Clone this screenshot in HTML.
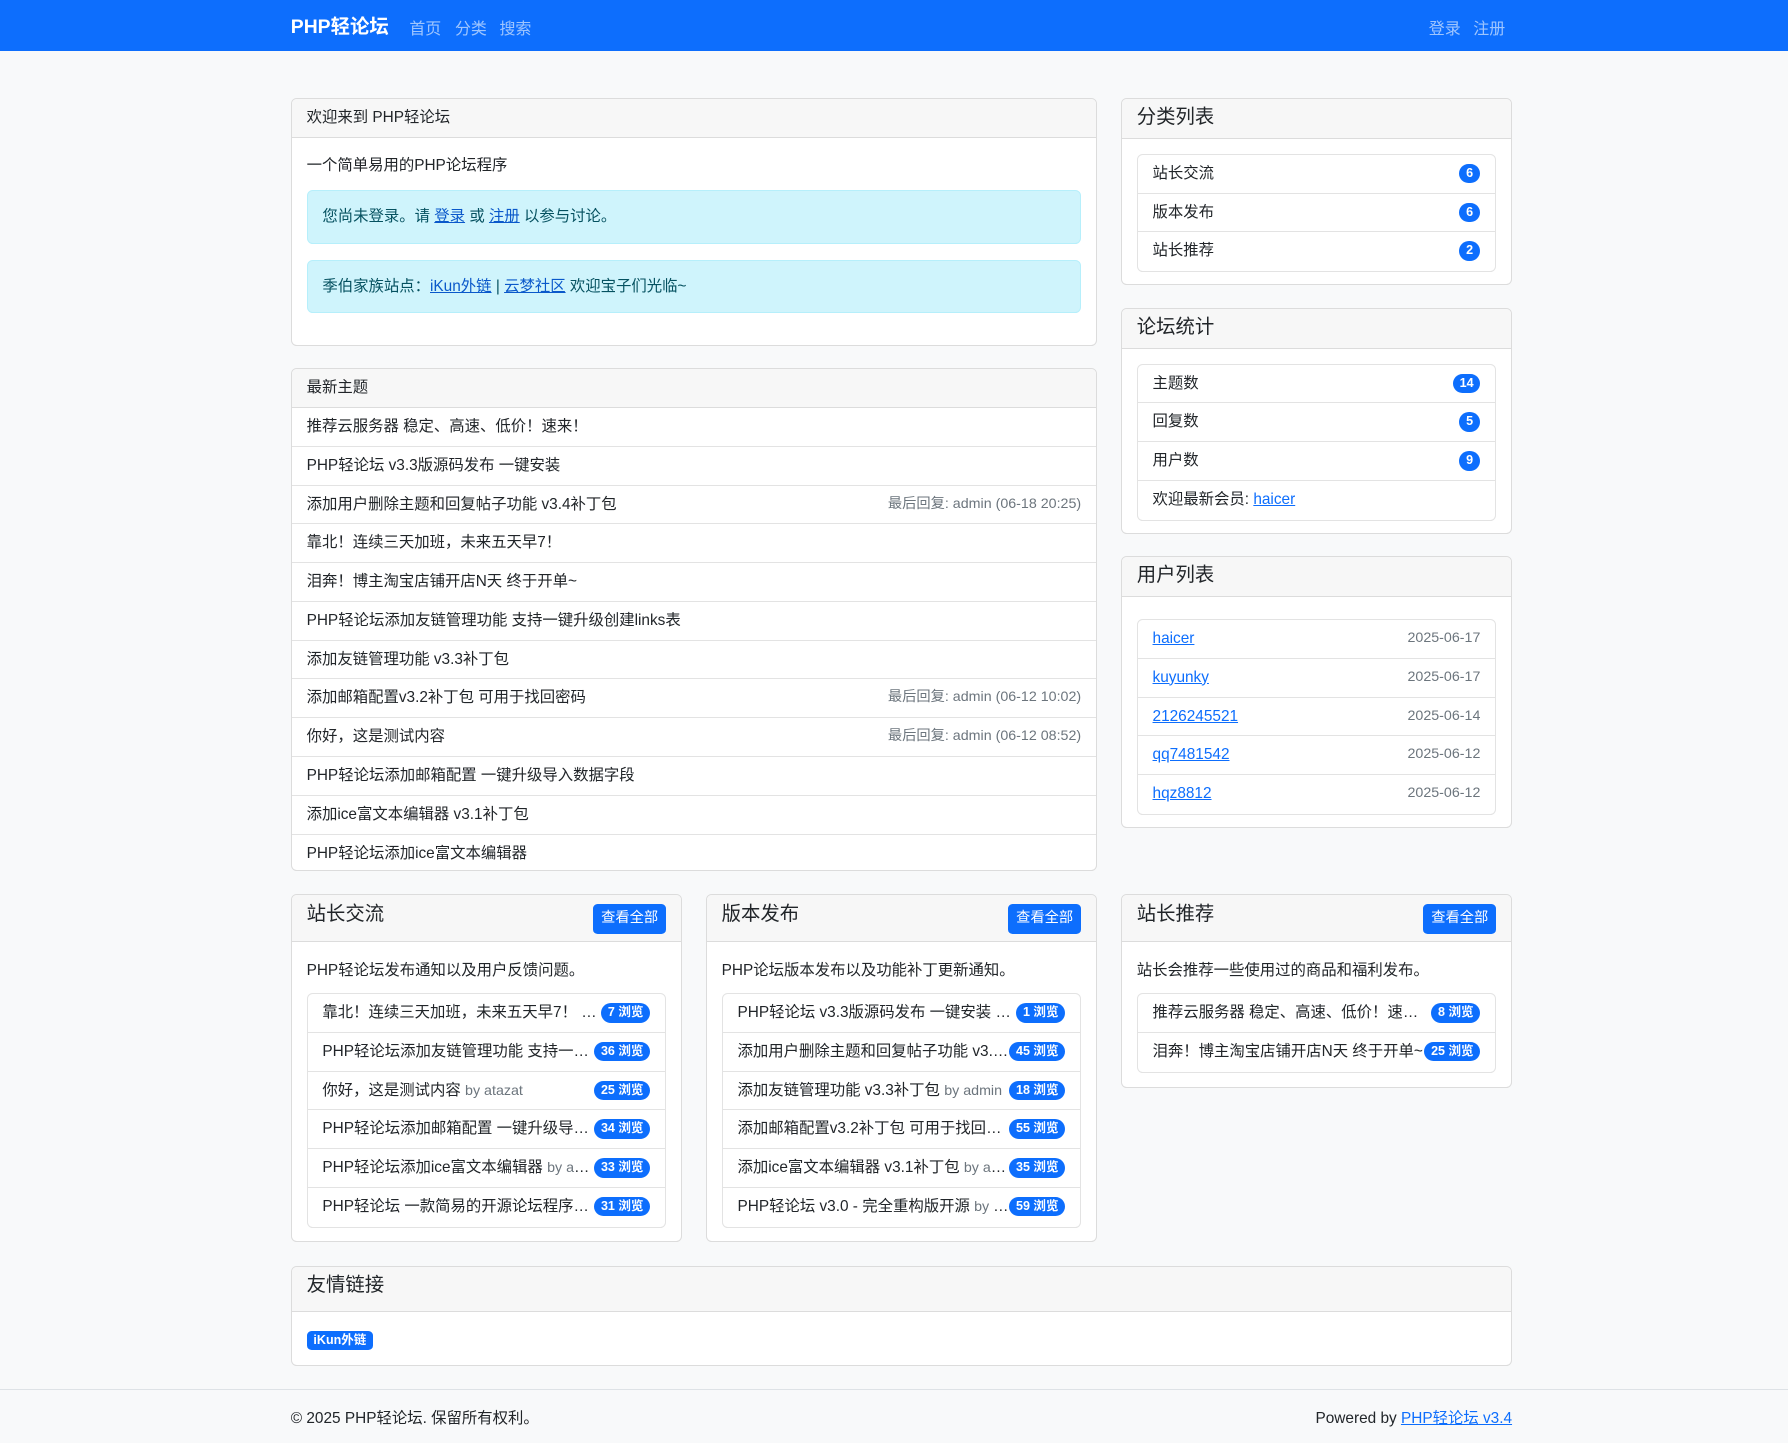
<!DOCTYPE html>
<html><head><meta charset="utf-8"><style>
html{zoom:1.1403}
*{box-sizing:border-box}
body{margin:0;background:#f8f9fa;font-family:"Liberation Sans","Noto Sans CJK SC",sans-serif;font-size:13.5px;color:#212529;width:1568px;height:1265px;overflow:hidden;position:relative}
a{color:#0d6efd}
.nav{height:45px;background:#0d6efd;position:relative}
.nav .brand{position:absolute;left:255px;top:10px;color:#fff;font-weight:bold;font-size:17px}
.nav span.l{position:absolute;top:13px;color:rgba(255,255,255,.6);font-size:14px}
.card{position:absolute;background:#fff;border:1px solid #dcdcdc;border-radius:5px;overflow:hidden}
.ch{background:#f7f7f7;border-bottom:1px solid #dcdcdc;height:34px;padding:0 13px;line-height:33px}
.ch.big{font-size:17px;height:35px}
.row{height:34px;line-height:33px;border-bottom:1px solid #e3e3e3;padding:0 13px;position:relative;white-space:nowrap;overflow:hidden}
.row:last-child{border-bottom:0}
.meta{position:absolute;right:13px;top:0;color:#6c757d;font-size:12.5px}
.lg{margin:0 13px;border:1px solid #e3e3e3;border-radius:5px}
.b{position:absolute;right:13px;top:8px;background:#0d6efd;color:#fff;font-size:11px;font-weight:bold;border-radius:9px;height:17px;line-height:17px;padding:0 6px;min-width:19px;text-align:center}
.alert{margin:0 13px;background:#cff4fc;border:1px solid #b6effb;border-radius:5px;height:47px;line-height:45px;padding:0 13px;color:#055160}
.alert a{color:#0a58ca}
.btn{position:absolute;right:13px;top:8px;background:#0d6efd;color:#fff;font-size:12.5px;border-radius:4px;height:26px;line-height:26px;padding:0 7px}
.ch2{background:#f7f7f7;border-bottom:1px solid #dcdcdc;height:41px;padding:0 13px;line-height:34px;font-size:17px;position:relative}
.tl .row{padding-right:60px;text-overflow:ellipsis}
.by{color:#6c757d;font-size:12.5px}
</style></head><body>
<div class="nav"><span class="brand">PHP轻论坛</span><span class="l" style="left:359px">首页</span><span class="l" style="left:399px">分类</span><span class="l" style="left:438px">搜索</span><span class="l" style="left:1253px">登录</span><span class="l" style="left:1292px">注册</span></div>

<div class="card" style="left:255px;top:86px;width:707px;height:217px">
<div class="ch">欢迎来到 PHP轻论坛</div>
<div style="padding:13px 13px 0;height:46px">一个简单易用的PHP论坛程序</div>
<div class="alert">您尚未登录。请 <a href="#">登录</a> 或 <a href="#">注册</a> 以参与讨论。</div>
<div class="alert" style="margin-top:14px">季伯家族站点：<a href="#">iKun外链</a> | <a href="#">云梦社区</a> 欢迎宝子们光临~</div>
</div>

<div class="card" style="left:255px;top:323px;width:707px;height:441px">
<div class="ch">最新主题</div>
<div class="row">推荐云服务器 稳定、高速、低价！速来！</div>
<div class="row">PHP轻论坛 v3.3版源码发布 一键安装</div>
<div class="row">添加用户删除主题和回复帖子功能 v3.4补丁包<span class="meta">最后回复: admin (06-18 20:25)</span></div>
<div class="row">靠北！连续三天加班，未来五天早7！</div>
<div class="row">泪奔！博主淘宝店铺开店N天 终于开单~</div>
<div class="row">PHP轻论坛添加友链管理功能 支持一键升级创建links表</div>
<div class="row">添加友链管理功能 v3.3补丁包</div>
<div class="row">添加邮箱配置v3.2补丁包 可用于找回密码<span class="meta">最后回复: admin (06-12 10:02)</span></div>
<div class="row">你好，这是测试内容<span class="meta">最后回复: admin (06-12 08:52)</span></div>
<div class="row">PHP轻论坛添加邮箱配置 一键升级导入数据字段</div>
<div class="row">添加ice富文本编辑器 v3.1补丁包</div>
<div class="row">PHP轻论坛添加ice富文本编辑器</div>
</div>

<div class="card" style="left:983px;top:86px;width:343px;height:164px">
<div class="ch big">分类列表</div>
<div class="lg" style="margin-top:13px">
<div class="row">站长交流<span class="b">6</span></div>
<div class="row">版本发布<span class="b">6</span></div>
<div class="row">站长推荐<span class="b">2</span></div>
</div></div>

<div class="card" style="left:983px;top:270px;width:343px;height:198px">
<div class="ch big">论坛统计</div>
<div class="lg" style="margin-top:13px">
<div class="row">主题数<span class="b">14</span></div>
<div class="row">回复数<span class="b">5</span></div>
<div class="row">用户数<span class="b">9</span></div>
<div class="row">欢迎最新会员: <a href="#">haicer</a></div>
</div></div>

<div class="card" style="left:983px;top:488px;width:343px;height:238px">
<div class="ch big">用户列表</div>
<div class="lg" style="margin-top:19px">
<div class="row"><a href="#">haicer</a><span class="meta">2025-06-17</span></div>
<div class="row"><a href="#">kuyunky</a><span class="meta">2025-06-17</span></div>
<div class="row"><a href="#">2126245521</a><span class="meta">2025-06-14</span></div>
<div class="row"><a href="#">qq7481542</a><span class="meta">2025-06-12</span></div>
<div class="row"><a href="#">hqz8812</a><span class="meta">2025-06-12</span></div>
</div></div>

<div class="card" style="left:255px;top:784px;width:343px;height:305px">
<div class="ch2">站长交流<span class="btn">查看全部</span></div>
<div style="padding:14px 13px 0;height:45px">PHP轻论坛发布通知以及用户反馈问题。</div>
<div class="lg tl">
<div class="row">靠北！连续三天加班，未来五天早7！ <span class="by">by admin</span><span class="b">7 浏览</span></div>
<div class="row">PHP轻论坛添加友链管理功能 支持一键升级<span class="b">36 浏览</span></div>
<div class="row">你好，这是测试内容 <span class="by">by atazat</span><span class="b">25 浏览</span></div>
<div class="row">PHP轻论坛添加邮箱配置 一键升级导入数据<span class="b">34 浏览</span></div>
<div class="row">PHP轻论坛添加ice富文本编辑器 <span class="by">by admin</span><span class="b">33 浏览</span></div>
<div class="row">PHP轻论坛 一款简易的开源论坛程序发布<span class="b">31 浏览</span></div>
</div></div>

<div class="card" style="left:619px;top:784px;width:343px;height:305px">
<div class="ch2">版本发布<span class="btn">查看全部</span></div>
<div style="padding:14px 13px 0;height:45px">PHP论坛版本发布以及功能补丁更新通知。</div>
<div class="lg tl">
<div class="row">PHP轻论坛 v3.3版源码发布 一键安装 <span class="by">by admin</span><span class="b">1 浏览</span></div>
<div class="row">添加用户删除主题和回复帖子功能 v3.4补丁<span class="b">45 浏览</span></div>
<div class="row">添加友链管理功能 v3.3补丁包 <span class="by">by admin</span><span class="b">18 浏览</span></div>
<div class="row">添加邮箱配置v3.2补丁包 可用于找回密码<span class="b">55 浏览</span></div>
<div class="row">添加ice富文本编辑器 v3.1补丁包 <span class="by">by admin</span><span class="b">35 浏览</span></div>
<div class="row">PHP轻论坛 v3.0 - 完全重构版开源 <span class="by">by admin</span><span class="b">59 浏览</span></div>
</div></div>

<div class="card" style="left:983px;top:784px;width:343px;height:170px">
<div class="ch2">站长推荐<span class="btn">查看全部</span></div>
<div style="padding:14px 13px 0;height:45px">站长会推荐一些使用过的商品和福利发布。</div>
<div class="lg tl">
<div class="row">推荐云服务器 稳定、高速、低价！速来！<span class="b">8 浏览</span></div>
<div class="row">泪奔！博主淘宝店铺开店N天 终于开单~<span class="b">25 浏览</span></div>
</div></div>

<div class="card" style="left:255px;top:1110px;width:1071px;height:88px">
<div class="ch2" style="height:40px;line-height:33px">友情链接</div>
<div style="padding:16px 13px"><span style="display:inline-block;background:#0d6efd;color:#fff;font-size:11px;font-weight:bold;border-radius:4px;height:17px;line-height:17px;padding:0 6px">iKun外链</span></div>
</div>

<div style="position:absolute;left:0;right:0;top:1218px;border-top:1px solid #dee2e6"></div>
<div style="position:absolute;left:255px;top:1233px">© 2025 PHP轻论坛. 保留所有权利。</div>
<div style="position:absolute;right:242px;top:1233px">Powered by <a href="#">PHP轻论坛 v3.4</a></div>
</body></html>
